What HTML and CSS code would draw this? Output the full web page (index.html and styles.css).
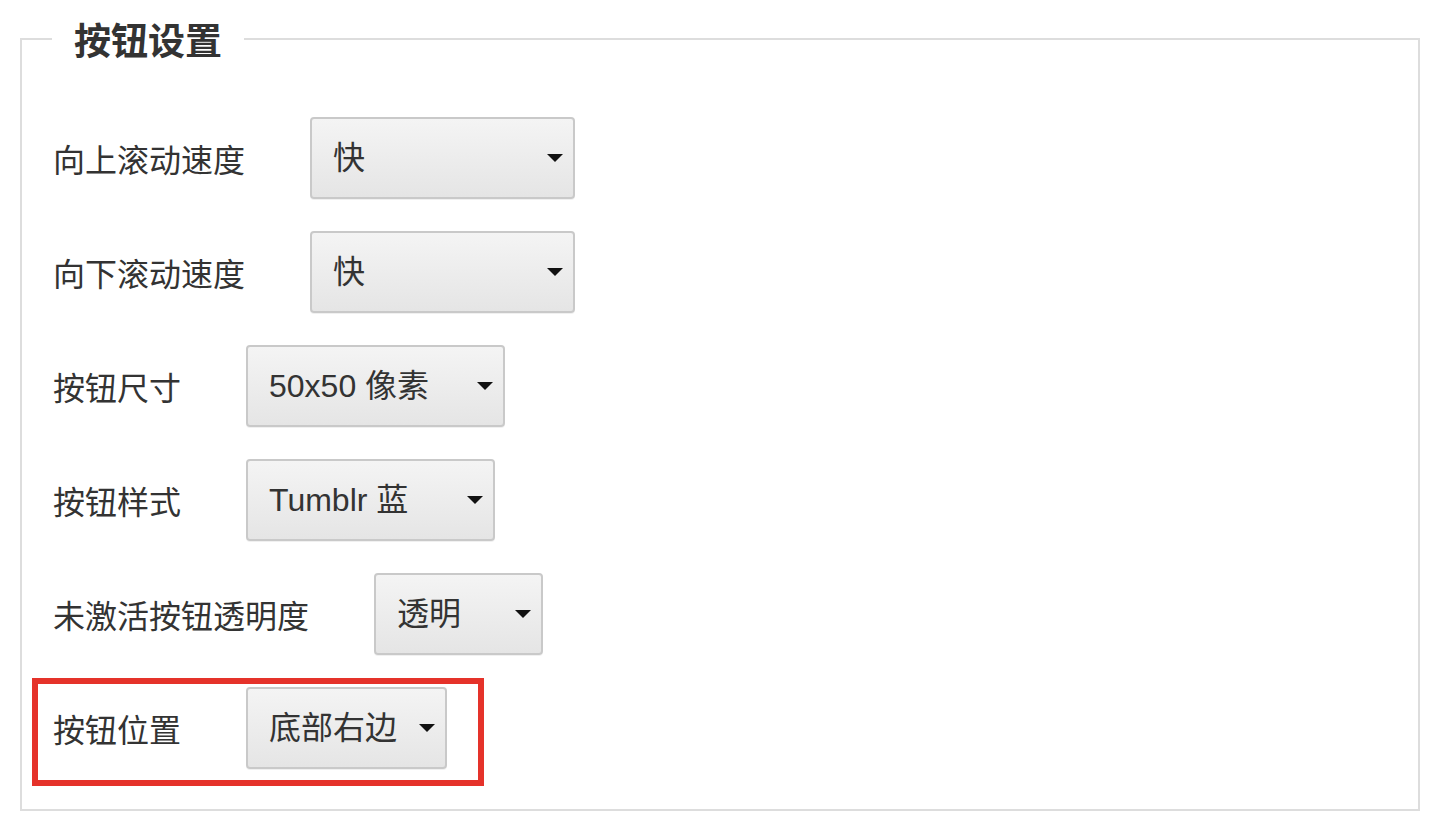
FILE: index.html
```html
<!DOCTYPE html>
<html lang="zh-CN">
<head>
<meta charset="utf-8">
<title>按钮设置</title>
<link rel="stylesheet" href="styles.css">
</head>
<body>
<fieldset class="panel">
  <legend class="panel-title">按钮设置</legend>
  <div class="rows">
    <div class="row">
      <span class="label">向上滚动速度</span>
      <div class="select select-speed"><span class="select-text">快</span><svg class="caret" width="16" height="8" viewBox="0 0 16 8"><path d="M0 0H16L8 8Z"/></svg></div>
    </div>
    <div class="row">
      <span class="label">向下滚动速度</span>
      <div class="select select-speed"><span class="select-text">快</span><svg class="caret" width="16" height="8" viewBox="0 0 16 8"><path d="M0 0H16L8 8Z"/></svg></div>
    </div>
    <div class="row">
      <span class="label">按钮尺寸</span>
      <div class="select select-size"><span class="select-text">50x50 像素</span><svg class="caret" width="16" height="8" viewBox="0 0 16 8"><path d="M0 0H16L8 8Z"/></svg></div>
    </div>
    <div class="row">
      <span class="label">按钮样式</span>
      <div class="select select-style"><span class="select-text">Tumblr 蓝</span><svg class="caret" width="16" height="8" viewBox="0 0 16 8"><path d="M0 0H16L8 8Z"/></svg></div>
    </div>
    <div class="row">
      <span class="label">未激活按钮透明度</span>
      <div class="select select-opacity"><span class="select-text">透明</span><svg class="caret" width="16" height="8" viewBox="0 0 16 8"><path d="M0 0H16L8 8Z"/></svg></div>
    </div>
    <div class="row row-highlight">
      <span class="label">按钮位置</span>
      <div class="select select-position"><span class="select-text">底部右边</span><svg class="caret" width="16" height="8" viewBox="0 0 16 8"><path d="M0 0H16L8 8Z"/></svg></div>
      <span class="highlight-box"></span>
    </div>
  </div>
</fieldset>
</body>
</html>
```

FILE: styles.css
```css
html, body {
  margin: 0;
  padding: 0;
  background: #ffffff;
}

body {
  font-family: "Liberation Sans", "Noto Sans CJK SC", sans-serif;
  color: #333333;
  padding: 17px 22px 0 20px;
}

.panel {
  margin: 0;
  width: 1400px;
  box-sizing: border-box;
  border: 2px solid #dddddd;
  padding: 56px 31px 40px 31px;
  min-inline-size: 0;
}

.panel-title {
  font-family: "Noto Sans CJK SC", sans-serif;
  font-size: 37px;
  font-weight: 700;
  line-height: 44px;
  color: #333333;
  padding: 0 22px;
  margin-left: -1px;
}

.rows {
  display: flex;
  flex-direction: column;
  gap: 32px;
}

.row {
  display: flex;
  align-items: center;
  gap: 65px;
  height: 82px;
}

.label {
  font-family: "Noto Sans CJK SC", sans-serif;
  font-size: 32px;
  line-height: 40px;
  color: #333333;
  white-space: nowrap;
}

.select {
  box-sizing: border-box;
  height: 82px;
  display: flex;
  align-items: center;
  justify-content: space-between;
  padding: 0 10px 0 21px;
  border: 2px solid #c9c9c9;
  border-radius: 4px;
  background: linear-gradient(#f4f4f4, #e5e5e5);
  box-shadow: 0 1px 0 rgba(0, 0, 0, 0.06);
}

.select-text {
  font-family: "Liberation Sans", "Noto Sans CJK SC", sans-serif;
  font-size: 32px;
  line-height: 40px;
  color: #333333;
  white-space: nowrap;
}

.caret {
  display: block;
  fill: #111111;
  flex: none;
}

.select-speed { width: 265px; }
.select-size { width: 259px; }
.select-style { width: 249px; }
.select-opacity { width: 169px; }
.select-position { width: 201px; }

.row-highlight {
  position: relative;
  width: fit-content;
}

.highlight-box {
  position: absolute;
  top: -9px;
  bottom: -17px;
  left: -21px;
  right: -37px;
  border: 6px solid #e5322a;
  pointer-events: none;
}
```
